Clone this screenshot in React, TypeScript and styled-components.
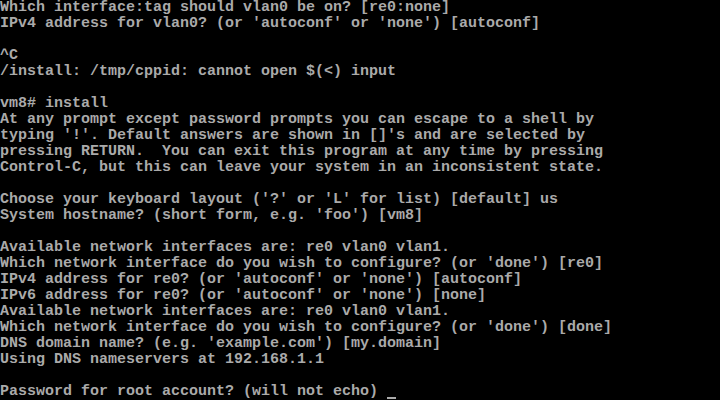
import React from "react";
import styled, { createGlobalStyle } from "styled-components";

const Global = createGlobalStyle`
  html, body { margin: 0; padding: 0; background: #000; }
  #root { width: 720px; height: 400px; }
`;

const Screen = styled.div`
  width: 720px;
  height: 400px;
  background: #000;
  color: #aaaaaa;
  font-family: "Liberation Mono", "DejaVu Sans Mono", monospace;
  font-size: 15px;
  font-weight: bold;
  overflow: hidden;
  display: flex;
  flex-direction: column;
`;

const Line = styled.div`
  height: 16px;
  line-height: 16px;
  white-space: pre;
`;

const Cursor = styled.span`
  display: inline-block;
  width: 9px;
  height: 16px;
  vertical-align: top;
  position: relative;
  &::after {
    content: "";
    position: absolute;
    left: 0;
    right: 0;
    bottom: 1px;
    height: 2px;
    background: #aaaaaa;
  }
`;

const lines = [
  "Which interface:tag should vlan0 be on? [re0:none]",
  "IPv4 address for vlan0? (or 'autoconf' or 'none') [autoconf]",
  "",
  "^C",
  "/install: /tmp/cppid: cannot open $(<) input",
  "",
  "vm8# install",
  "At any prompt except password prompts you can escape to a shell by",
  "typing '!'. Default answers are shown in []'s and are selected by",
  "pressing RETURN.  You can exit this program at any time by pressing",
  "Control-C, but this can leave your system in an inconsistent state.",
  "",
  "Choose your keyboard layout ('?' or 'L' for list) [default] us",
  "System hostname? (short form, e.g. 'foo') [vm8]",
  "",
  "Available network interfaces are: re0 vlan0 vlan1.",
  "Which network interface do you wish to configure? (or 'done') [re0]",
  "IPv4 address for re0? (or 'autoconf' or 'none') [autoconf]",
  "IPv6 address for re0? (or 'autoconf' or 'none') [none]",
  "Available network interfaces are: re0 vlan0 vlan1.",
  "Which network interface do you wish to configure? (or 'done') [done]",
  "DNS domain name? (e.g. 'example.com') [my.domain]",
  "Using DNS nameservers at 192.168.1.1",
  "",
];

export default function App() {
  return (
    <>
      <Global />
      <Screen>
        {lines.map((l, i) => (
          <Line key={i}>{l}</Line>
        ))}
        <Line>
          {"Password for root account? (will not echo) "}
          <Cursor />
        </Line>
      </Screen>
    </>
  );
}
